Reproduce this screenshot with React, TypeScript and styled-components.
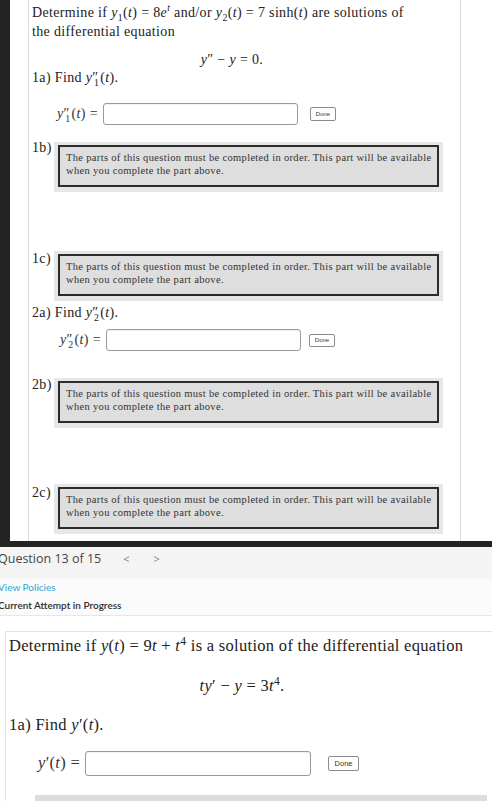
import React from "react";
import styled, { createGlobalStyle } from "styled-components";

const Global = createGlobalStyle`
  html, body { margin: 0; padding: 0; background: #fff; }
  body { width: 492px; overflow: hidden; }
`;

const Page = styled.div`
  width: 492px;
  height: 801px;
  overflow: hidden;
  display: flex;
  flex-direction: column;
`;

/* ---------- upper (embedded) question ---------- */

const Frame = styled.div`
  background: #232323;
  padding: 0 0 6px 10px;
`;

const Panel = styled.div`
  background: #fff;
  height: 541px;
  padding-left: 18px;
  display: flex;
  overflow: hidden;
`;

const QuestionCard = styled.div`
  width: 428px;
  border-left: 1px solid #d9d9d9;
  border-right: 1px solid #d9d9d9;
  padding: 3px 0 0 3px;
  font-family: "Liberation Serif", "Times New Roman", serif;
  font-size: 14px;
  letter-spacing: 0.35px;
  color: #222;
`;

const Intro = styled.div`
  height: 38px;
  line-height: 19px;
  white-space: nowrap;
`;

const Display = styled.div<{ $width: number; $gap: number; $lh: number }>`
  width: ${(p) => p.$width}px;
  height: ${(p) => p.$lh}px;
  margin-top: ${(p) => p.$gap}px;
  line-height: ${(p) => p.$lh}px;
  text-align: center;
  white-space: nowrap;
`;

const PartTitle = styled.div<{ $gap: number; $lh: number }>`
  height: ${(p) => p.$lh}px;
  margin-top: ${(p) => p.$gap}px;
  line-height: ${(p) => p.$lh}px;
  white-space: nowrap;
`;

const AnswerRow = styled.div<{ $gap: number; $indent: number; $btnGap: number; $h: number }>`
  display: flex;
  align-items: center;
  height: ${(p) => p.$h}px;
  margin-top: ${(p) => p.$gap}px;
  padding-left: ${(p) => p.$indent}px;
  & > button {
    margin-left: ${(p) => p.$btnGap}px;
  }
`;

const AnswerLabel = styled.span`
  white-space: nowrap;
  margin-right: 5px;
  line-height: 1;
  color: #333;
`;

const AnswerInput = styled.div<{ $w: number }>`
  width: ${(p) => p.$w}px;
  height: 100%;
  box-sizing: border-box;
  border: 1px solid #9a9a9a;
  border-radius: 3px;
  background: #fff;
  box-shadow: inset 0 1px 1px rgba(0, 0, 0, 0.06);
`;

const DoneButton = styled.button<{ $w: number; $h: number; $fs: number }>`
  width: ${(p) => p.$w}px;
  height: ${(p) => p.$h}px;
  box-sizing: border-box;
  padding: 0;
  border: 1px solid #8c8c8c;
  border-radius: 2px;
  background: #fff;
  font-family: "Liberation Sans", Arial, sans-serif;
  font-size: ${(p) => p.$fs}px;
  letter-spacing: 0;
  color: #333;
  line-height: 1;
`;

const LockedRow = styled.div<{ $gap: number; $labelTop: number }>`
  display: flex;
  align-items: flex-start;
  height: 50px;
  margin-top: ${(p) => p.$gap}px;
  & > span {
    margin-top: ${(p) => p.$labelTop}px;
  }
`;

const PartLabel = styled.span`
  width: 22px;
  line-height: 14px;
  flex: none;
`;

const LockedOuter = styled.div`
  width: 389px;
  height: 50px;
  box-sizing: border-box;
  padding: 3px 4px 5px 4px;
  background: #e7e7e7;
`;

const LockedInner = styled.div`
  box-sizing: border-box;
  height: 42px;
  border: 2px solid #2b2b2b;
  background: #dedede;
  padding: 4px 0 0 6px;
  font-size: 10.5px;
  letter-spacing: 0.33px;
  line-height: 13px;
  color: #333;
  white-space: nowrap;
`;

/* ---------- math helpers ---------- */

const V = styled.i`
  font-style: italic;
`;

const Sup = styled.sup`
  font-size: 0.7em;
  line-height: 0;
`;

const Sub = styled.sub`
  font-size: 0.7em;
  line-height: 0;
`;

const SubUnder = styled(Sub)`
  margin-left: -0.45em;
  margin-right: 0.1em;
`;

/* ---------- WileyPLUS chrome ---------- */

const NavBar = styled.div`
  height: 33px;
  box-sizing: border-box;
  padding-top: 3px;
  background: #f4f4f4;
  display: flex;
  align-items: flex-start;
  font-family: "Open Sans", "Noto Sans", sans-serif;
  font-size: 12.5px;
  line-height: 17px;
  color: #454545;
  margin-left: -2px;
`;

const Chevron = styled.span<{ $left: number }>`
  margin-left: ${(p) => p.$left}px;
  font-size: 11px;
  color: #808080;
`;

const Info = styled.div`
  height: 36px;
  background: #fbfbfb;
  border-bottom: 1px solid #e6e6e6;
  padding-top: 1px;
  margin-left: -2px;
  font-family: Lato, "Open Sans", sans-serif;
  font-size: 10px;
  display: flex;
  flex-direction: column;
  gap: 5px;
`;

const PolicyLink = styled.a`
  color: #3a9fd0;
  text-decoration: none;
  line-height: 13px;
  margin-top: 1px;
`;

const AttemptState = styled.div`
  color: #2e2e2e;
  font-weight: 600;
  line-height: 13px;
`;

const Card = styled.div`
  margin: 15px 0 0 5px;
  border-top: 1px solid #e3e3e3;
  border-left: 1px solid #e3e3e3;
  padding: 4px 0 0 3px;
  font-family: "Liberation Serif", "Times New Roman", serif;
  font-size: 16.5px;
  letter-spacing: 0.3px;
  color: #222;
  flex: 1;
`;

const CardIntro = styled.div`
  height: 20px;
  line-height: 20px;
  white-space: nowrap;
`;

const NextPart = styled.div`
  margin: 19px 0 0 26px;
  width: 452px;
  height: 6px;
  background: #dcdcdc;
`;

const lockedText = (
  <>
    The parts of this question must be completed in order. This part will be available
    <br />
    when you complete the part above.
  </>
);

const Locked = ({ label, gap, labelTop }: { label: string; gap: number; labelTop: number }) => (
  <LockedRow $gap={gap} $labelTop={labelTop}>
    <PartLabel>{label}</PartLabel>
    <LockedOuter>
      <LockedInner>{lockedText}</LockedInner>
    </LockedOuter>
  </LockedRow>
);

const Y2nd = ({ n }: { n: string }) => (
  <>
    <V>y</V>″<SubUnder>{n}</SubUnder>(<V>t</V>)
  </>
);

export default function App() {
  return (
    <Page>
      <Global />
      <Frame>
        <Panel>
          <QuestionCard>
            <Intro>
              Determine if <V>y</V>
              <Sub>1</Sub>(<V>t</V>) = 8<V>e</V>
              <Sup>
                <V>t</V>
              </Sup>{" "}
              and/or <V>y</V>
              <Sub>2</Sub>(<V>t</V>) = 7 sinh(<V>t</V>) are solutions of
              <br />
              the differential equation
            </Intro>
            <Display $width={400} $gap={11} $lh={16}>
              <V>y</V>″ − <V>y</V> = 0.
            </Display>
            <PartTitle $gap={2} $lh={16}>
              1a) Find <Y2nd n="1" />.
            </PartTitle>
            <AnswerRow $gap={17} $h={22} $indent={25} $btnGap={12}>
              <AnswerLabel>
                <Y2nd n="1" /> =
              </AnswerLabel>
              <AnswerInput $w={195} />
              <DoneButton $w={26} $h={14} $fs={6}>
                Done
              </DoneButton>
            </AnswerRow>
            <Locked label="1b)" gap={17} labelTop={-1} />
            <Locked label="1c)" gap={59} labelTop={1} />
            <PartTitle $gap={4} $lh={16}>
              2a) Find <Y2nd n="2" />.
            </PartTitle>
            <AnswerRow $gap={8} $h={22} $indent={28} $btnGap={8}>
              <AnswerLabel>
                <Y2nd n="2" /> =
              </AnswerLabel>
              <AnswerInput $w={195} />
              <DoneButton $w={26} $h={13} $fs={6}>
                Done
              </DoneButton>
            </AnswerRow>
            <Locked label="2b)" gap={27} labelTop={0} />
            <Locked label="2c)" gap={56} labelTop={2} />
          </QuestionCard>
        </Panel>
      </Frame>

      <NavBar>
        Question 13 of 15
        <Chevron $left={22}>&lt;</Chevron>
        <Chevron $left={24}>&gt;</Chevron>
      </NavBar>
      <Info>
        <PolicyLink href="#">View Policies</PolicyLink>
        <AttemptState>Current Attempt in Progress</AttemptState>
      </Info>

      <Card>
        <CardIntro>
          Determine if <V>y</V>(<V>t</V>) = 9<V>t</V> + <V>t</V>
          <Sup>4</Sup> is a solution of the differential equation
        </CardIntro>
        <Display $width={466} $gap={20} $lh={20}>
          <V>ty</V>′ − <V>y</V> = 3<V>t</V>
          <Sup>4</Sup>.
        </Display>
        <PartTitle $gap={19} $lh={20}>
          1a) Find <V>y</V>′(<V>t</V>).
        </PartTitle>
        <AnswerRow $gap={16} $h={25} $indent={29} $btnGap={17}>
          <AnswerLabel>
            <V>y</V>′(<V>t</V>) =
          </AnswerLabel>
          <AnswerInput $w={226} />
          <DoneButton $w={31} $h={15} $fs={7.5}>
            Done
          </DoneButton>
        </AnswerRow>
        <NextPart />
      </Card>
    </Page>
  );
}
